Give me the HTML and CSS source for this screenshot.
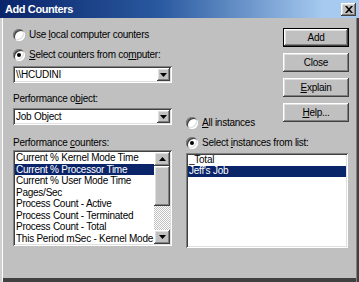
FILE: index.html
```html
<!DOCTYPE html>
<html>
<head>
<meta charset="utf-8">
<title>Add Counters</title>
<link rel="stylesheet" href="styles.css">
</head>
<body>
<div class="window">
  <div class="titlebar">
    <span class="title">Add Counters</span>
    <span class="close-btn"><svg width="8" height="7" viewBox="0 0 8 7"><path d="M0 0h2l2 2.3L6 0h2L5 3.5 8 7H6L4 4.7 2 7H0l3-3.5z" fill="#000"/></svg></span>
  </div>
  <div class="client">
    <div class="left">
      <div class="radio-row"><span class="radio"></span><span>Use <u>l</u>ocal computer counters</span></div>
      <div class="radio-row r2"><span class="radio checked"></span><span><u>S</u>elect counters from co<u>m</u>puter:</span></div>
      <div class="combo c1 sunken"><span class="combo-text">\\HCUDINI</span><span class="drop raised"><svg width="7" height="4" viewBox="0 0 7 4"><path d="M0 0h7L3.5 4z" fill="#000"/></svg></span></div>
      <div class="label l1">Performance o<u>b</u>ject:</div>
      <div class="combo c2 sunken"><span class="combo-text">Job Object</span><span class="drop raised"><svg width="7" height="4" viewBox="0 0 7 4"><path d="M0 0h7L3.5 4z" fill="#000"/></svg></span></div>
      <div class="label l2">Performance <u>c</u>ounters:</div>
      <div class="list counters sunken">
        <div class="items">
          <div class="item">Current % Kernel Mode Time</div>
          <div class="item sel">Current % Processor Time</div>
          <div class="item">Current % User Mode Time</div>
          <div class="item">Pages/Sec</div>
          <div class="item">Process Count - Active</div>
          <div class="item">Process Count - Terminated</div>
          <div class="item">Process Count - Total</div>
          <div class="item">This Period mSec - Kernel Mode</div>
        </div>
        <div class="vscroll">
          <div class="sb-btn raised"><svg width="7" height="4" viewBox="0 0 7 4"><path d="M3.5 0L7 4H0z" fill="#000"/></svg></div>
          <div class="thumb raised"></div>
          <div class="track"></div>
          <div class="sb-btn raised"><svg width="7" height="4" viewBox="0 0 7 4"><path d="M0 0h7L3.5 4z" fill="#000"/></svg></div>
        </div>
      </div>
    </div>
    <div class="right">
      <div class="buttons">
        <div class="btn raised default">Add</div>
        <div class="btn raised">Close</div>
        <div class="btn raised"><u>E</u>xplain</div>
        <div class="btn raised"><u>H</u>elp...</div>
      </div>
      <div class="radio-row ri1"><span class="radio"></span><span><u>A</u>ll instances</span></div>
      <div class="radio-row ri2"><span class="radio checked"></span><span>Select <u>i</u>nstances from list:</span></div>
      <div class="list instances sunken">
        <div class="items">
          <div class="item">_Total</div>
          <div class="item sel">Jeff's Job</div>
        </div>
      </div>
    </div>
  </div>
</div>
</body>
</html>
```

FILE: styles.css
```css
* { box-sizing: border-box; }
html, body { margin: 0; padding: 0; }
body {
  width: 359px;
  height: 282px;
  overflow: hidden;
  background: #c0c0c0;
  font-family: "Liberation Sans", Arial, sans-serif;
  font-size: 10px;
  letter-spacing: -0.25px;
  color: #000;
}
u { text-decoration: underline; text-underline-offset: 1px; }

.window {
  width: 359px;
  height: 282px;
  display: flex;
  flex-direction: column;
}

.titlebar {
  height: 18px;
  flex: none;
  background: linear-gradient(to right, #0a246a 0%, #2a5aa0 45%, #a6caf0 90%, #a6caf0 100%);
  display: flex;
  align-items: center;
  justify-content: space-between;
  padding: 0 3px 0 5px;
}
.title {
  color: #fff;
  font-weight: bold;
  font-size: 11px;
  letter-spacing: -0.4px;
}
.close-btn {
  width: 15px;
  height: 13px;
  background: #c0c0c0;
  box-shadow: inset -1px -1px #404040, inset 1px 1px #fff, inset -2px -2px #808080, inset 2px 2px #dfdfdf;
  display: flex;
  align-items: center;
  justify-content: center;
}

.client {
  flex: 1;
  display: flex;
  padding: 10px 0 0 13px;
  box-shadow: inset 2px 0 #d0d0d0, inset 3px 0 #fff, inset -2px 0 #404040, inset -3px 0 #808080, inset 0 -4px #404040;
}

.left {
  width: 159px;
  display: flex;
  flex-direction: column;
}
.right {
  width: 163px;
  margin-left: 14px;
  display: flex;
  flex-direction: column;
}

.radio-row {
  height: 13px;
  display: flex;
  align-items: center;
  gap: 4px;
  white-space: nowrap;
}
.r2 { margin-top: 7px; }
.ri1 { margin-top: -6px; }
.ri2 { margin-top: 7px; }

.radio {
  width: 12px;
  height: 12px;
  border-radius: 50%;
  background: #fff;
  flex: none;
  position: relative;
  box-shadow: inset 1px 1px #808080, inset -1px -1px #fff, inset 2px 2px #404040, inset -2px -2px #dfdfdf;
}
.radio.checked::after {
  content: "";
  position: absolute;
  left: 4px;
  top: 4px;
  width: 4px;
  height: 4px;
  border-radius: 50%;
  background: #000;
}

.sunken {
  background: #fff;
  box-shadow: inset 1px 1px #808080, inset -1px -1px #fff, inset 2px 2px #404040, inset -2px -2px #dfdfdf;
}
.raised {
  background: #c0c0c0;
  box-shadow: inset -1px -1px #404040, inset 1px 1px #fff, inset -2px -2px #808080, inset 2px 2px #dfdfdf;
}

.combo {
  height: 17px;
  display: flex;
  align-items: stretch;
  padding: 2px;
}
.c1 { margin-top: 5px; }
.c2 { margin-top: 3px; }
.combo-text {
  flex: 1;
  padding-left: 1px;
  line-height: 13px;
}
.drop {
  width: 13px;
  display: flex;
  align-items: center;
  justify-content: center;
}

.label {
  height: 13px;
  line-height: 13px;
  white-space: nowrap;
}
.l1 { margin-top: 9px; }
.l2 { margin-top: 11px; }

.list {
  display: flex;
  padding: 2px;
  overflow: hidden;
}
.counters {
  margin-top: 1px;
  height: 96px;
}
.instances {
  margin-top: 4px;
  width: 162px;
  height: 95px;
}
.items {
  flex: 1;
  min-width: 0;
  overflow: hidden;
}
.item {
  height: 11.5px;
  line-height: 11.5px;
  padding-left: 1px;
  white-space: nowrap;
}
.instances .item {
  height: 11px;
  line-height: 10px;
}
.item.sel {
  background: #0a246a;
  color: #fff;
}

.vscroll {
  width: 16px;
  flex: none;
  display: flex;
  flex-direction: column;
}
.sb-btn {
  height: 14px;
  flex: none;
  display: flex;
  align-items: center;
  justify-content: center;
}
.thumb {
  height: 40px;
  flex: none;
}
.track {
  flex: 1;
  background-color: #c0c0c0;
  background-image: conic-gradient(#fff 25%, #c0c0c0 0 50%, #fff 0 75%, #c0c0c0 0);
  background-size: 2px 2px;
}

.buttons {
  display: flex;
  flex-direction: column;
  align-items: flex-end;
  gap: 6px;
}
.btn {
  width: 66px;
  height: 19px;
  display: flex;
  align-items: center;
  justify-content: center;
}
.btn.default {
  border: 1px solid #000;
}
```
